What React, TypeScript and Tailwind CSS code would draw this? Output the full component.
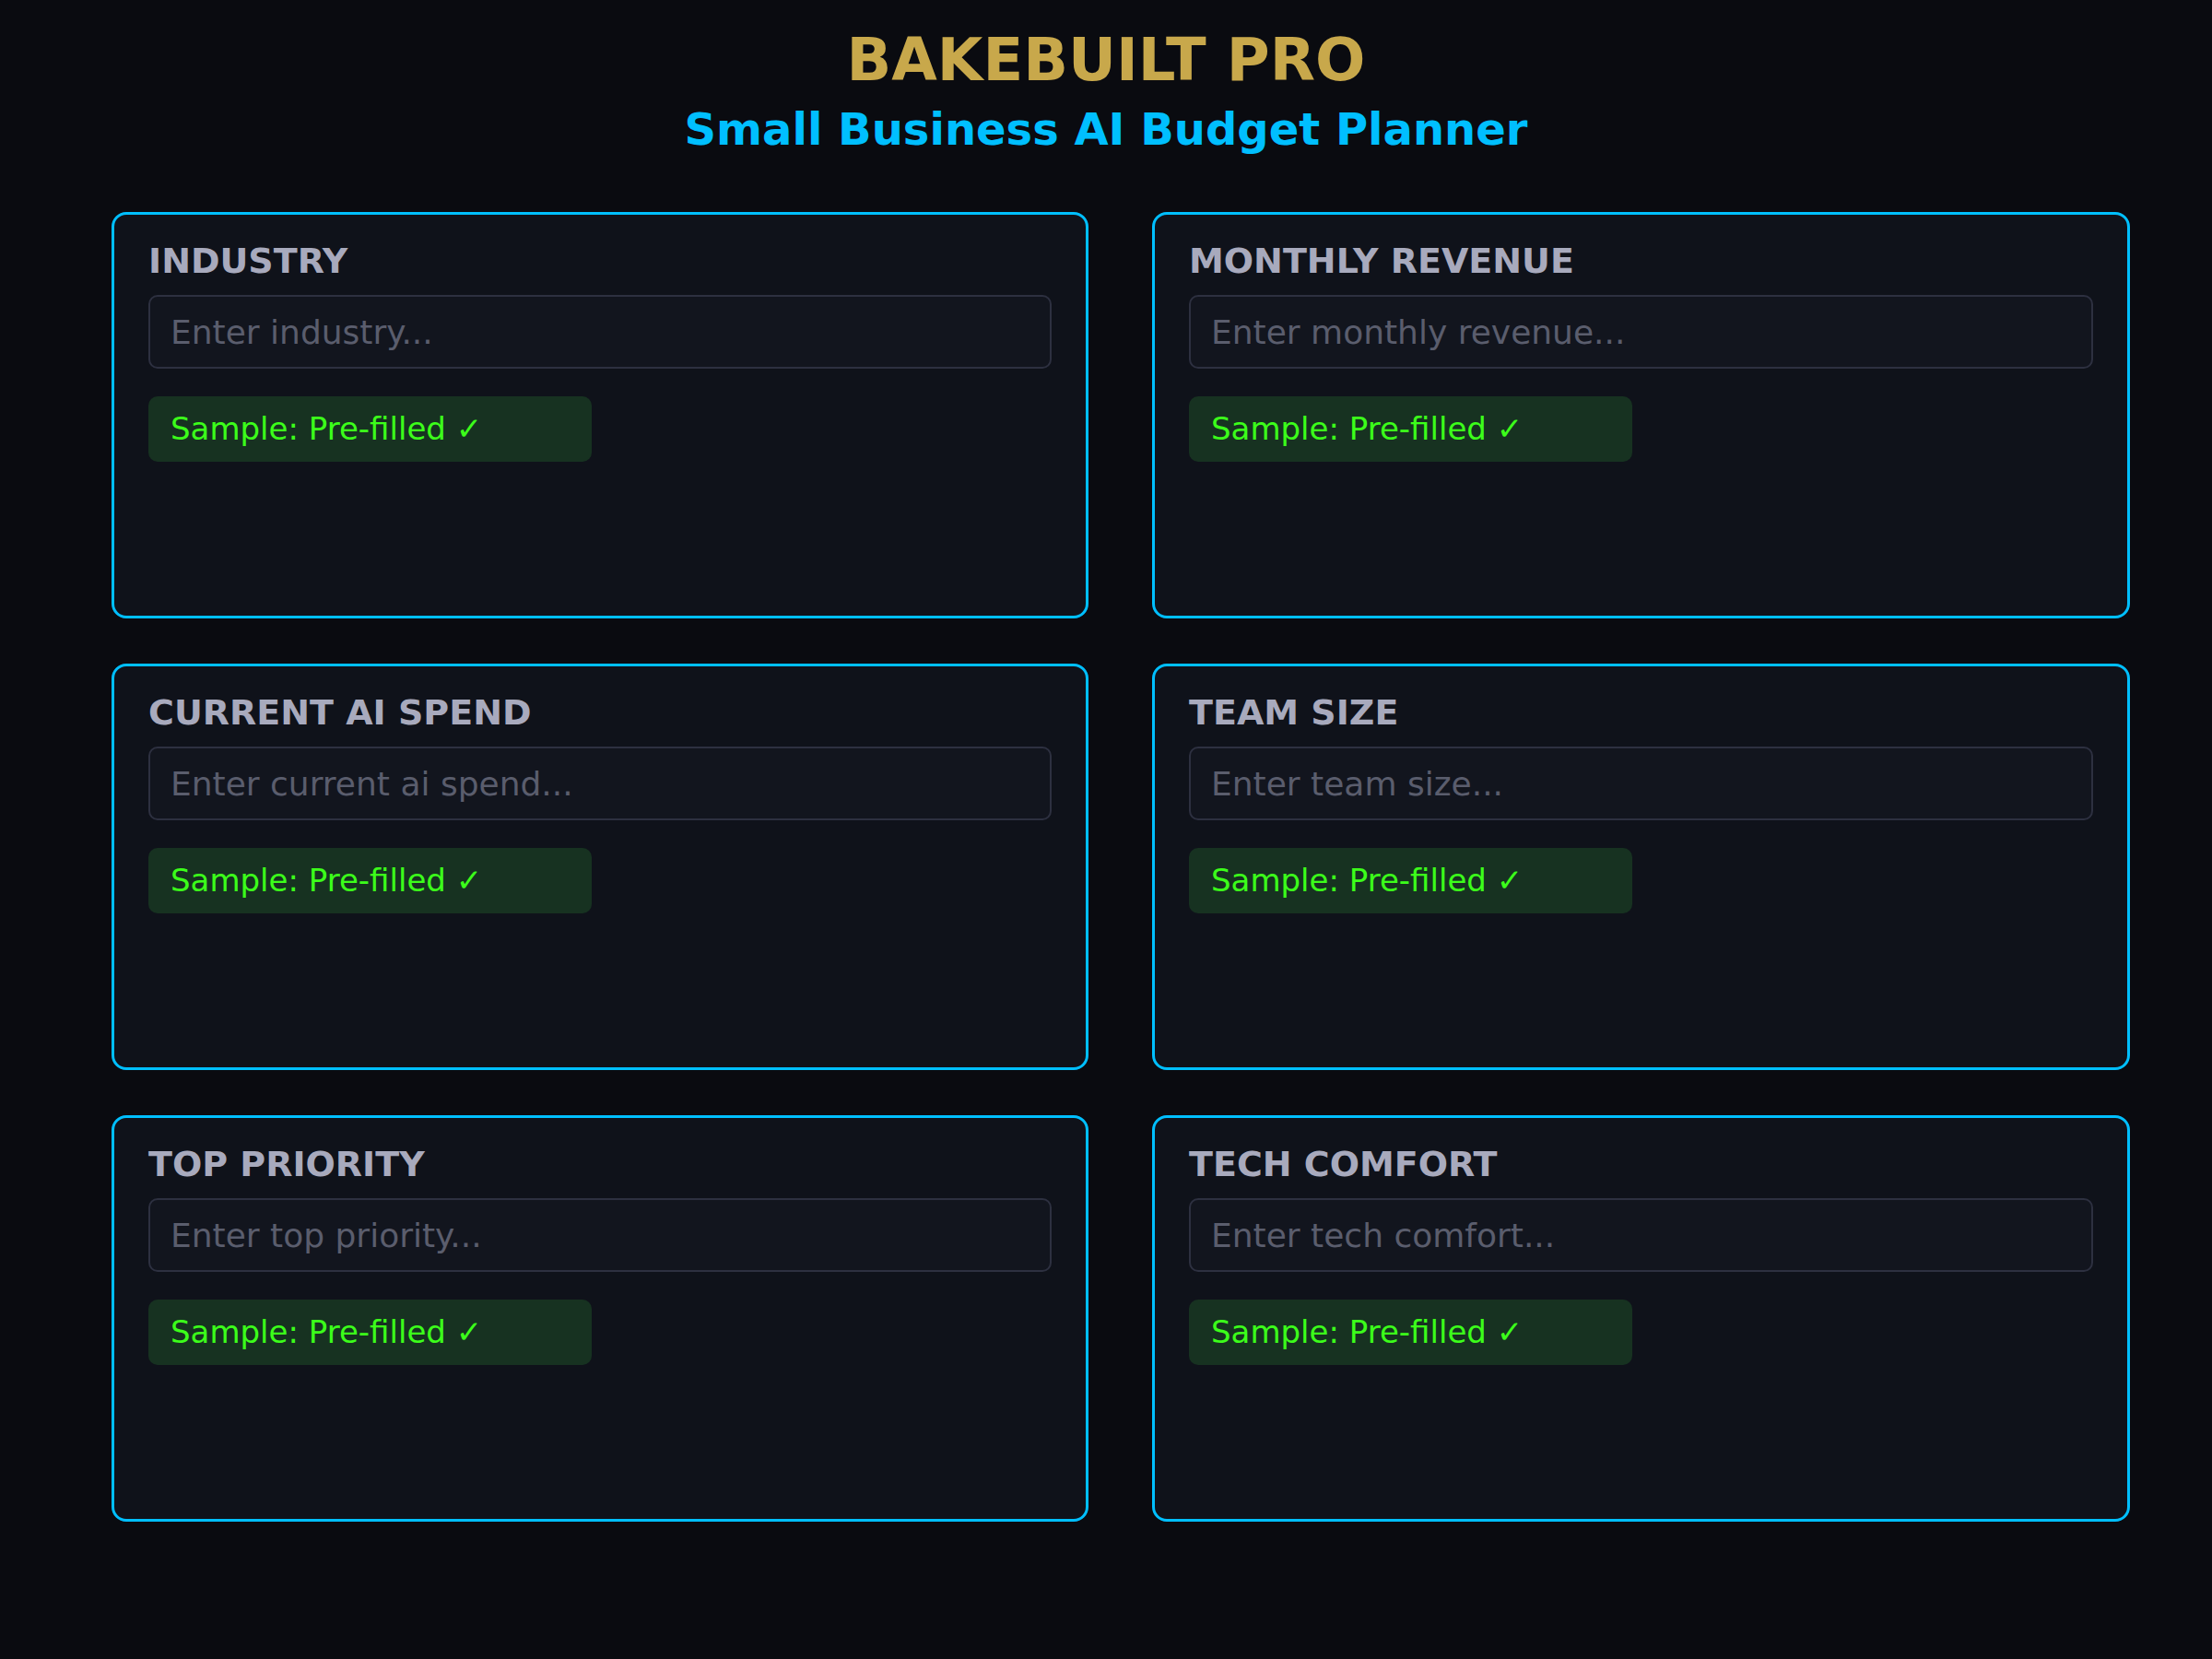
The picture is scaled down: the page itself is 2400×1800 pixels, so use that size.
const FIELDS = [
  { label: 'INDUSTRY', placeholder: 'Enter industry...' },
  { label: 'MONTHLY REVENUE', placeholder: 'Enter monthly revenue...' },
  { label: 'CURRENT AI SPEND', placeholder: 'Enter current ai spend...' },
  { label: 'TEAM SIZE', placeholder: 'Enter team size...' },
  { label: 'TOP PRIORITY', placeholder: 'Enter top priority...' },
  { label: 'TECH COMFORT', placeholder: 'Enter tech comfort...' },
]

function FieldCard({ label, placeholder }: { label: string; placeholder: string }) {
  return (
    <section className="flex h-[441px] flex-col rounded-[16px] border-[3px] border-[#00bfff] bg-[#0f121a] px-[37px] pt-[31px]">
      <h2 className="text-[38px] font-bold leading-none text-[#a8aabd]">{label}</h2>
      <input
        readOnly
        placeholder={placeholder}
        className="mt-[18px] h-[80px] w-full rounded-[10px] border-2 border-[#2d3040] bg-[#12151e] pl-[22px] text-[36px] text-[#c9cbd6] outline-none placeholder:text-[#5a5d6d]"
      />
      <div className="mt-[30px] flex h-[71px] w-[481px] items-center rounded-[10px] bg-[#173221] pl-[24px] text-[34px] text-[#3cff1a]">
        Sample: Pre-filled ✓
      </div>
    </section>
  )
}

export default function App() {
  return (
    <div className="h-[1800px] w-full bg-[#0a0b10] font-['DejaVu_Sans',sans-serif]">
      <header className="flex flex-col items-center pt-[33px]">
        <h1 className="text-[64px] font-bold leading-none text-[#c8a84b]">BAKEBUILT PRO</h1>
        <p className="mt-[19px] text-[48px] font-bold leading-none text-[#00bfff]">
          Small Business AI Budget Planner
        </p>
      </header>

      <main className="mt-[66px] grid grid-cols-[1060px_1061px] gap-x-[69px] gap-y-[49px] pl-[121px]">
        {FIELDS.map((f) => (
          <FieldCard key={f.label} label={f.label} placeholder={f.placeholder} />
        ))}
      </main>
    </div>
  )
}
